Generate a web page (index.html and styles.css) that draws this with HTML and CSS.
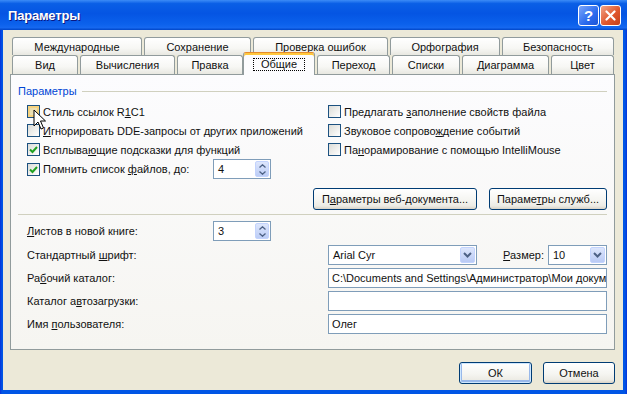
FILE: index.html
```html
<!DOCTYPE html>
<html lang="ru">
<head>
  <meta charset="UTF-8">
  <title>Параметры</title>
  <link rel="stylesheet" href="styles.css">
</head>
<body>
  <div class="window">
    <div class="titlebar">
      <span class="title">Параметры</span>
      <span class="cap-btn help">?</span>
      <span class="cap-btn close">
        <svg width="11" height="11" viewBox="0 0 11 11"><path d="M1.5 1.5 L9.5 9.5 M9.5 1.5 L1.5 9.5" stroke="#fff" stroke-width="2.2" stroke-linecap="round"/></svg>
      </span>
    </div>

    <div class="client">
      <div class="tabs">
        <div class="tab-row back">
          <div class="tab t-intl">Международные</div>
          <div class="tab t-save">Сохранение</div>
          <div class="tab t-errors">Проверка ошибок</div>
          <div class="tab t-spell">Орфография</div>
          <div class="tab t-secure">Безопасность</div>
        </div>
        <div class="tab-row front">
          <div class="tab t-view">Вид</div>
          <div class="tab t-calc">Вычисления</div>
          <div class="tab t-edit">Правка</div>
          <div class="tab active"><span class="focus">Общие</span></div>
          <div class="tab t-trans">Переход</div>
          <div class="tab t-lists">Списки</div>
          <div class="tab t-chart">Диаграмма</div>
          <div class="tab t-color">Цвет</div>
        </div>
      </div>

      <div class="panel">
        <div class="group-head">
          <span>Параметры</span>
          <span class="rule"></span>
        </div>

        <div class="options">
          <div class="col">
            <label class="check"><span class="box hover"></span><span>Стиль ссылок R<u>1</u>C1</span></label>
            <label class="check"><span class="box"></span><span><u>И</u>гнорировать DDE-запросы от других приложений</span></label>
            <label class="check"><span class="box checked"><svg width="11" height="11" viewBox="0 0 11 11"><path d="M2 5.5 L4.5 8 L9 3" fill="none" stroke="#21A121" stroke-width="2"/></svg></span><span>Всплыва<u>ю</u>щие подсказки для функций</span></label>
            <div class="spin-row">
              <label class="check wide"><span class="box checked"><svg width="11" height="11" viewBox="0 0 11 11"><path d="M2 5.5 L4.5 8 L9 3" fill="none" stroke="#21A121" stroke-width="2"/></svg></span><span>Помнить список <u>ф</u>айлов, до:</span></label>
              <div class="spin">
                <span>4</span>
                <span class="spin-btn">
                  <svg width="7" height="4" viewBox="0 0 7 4"><path d="M0.5 3.5 L3.5 0.8 L6.5 3.5" fill="none" stroke="#4D6185" stroke-width="1.3"/></svg>
                  <svg width="7" height="4" viewBox="0 0 7 4"><path d="M0.5 0.5 L3.5 3.2 L6.5 0.5" fill="none" stroke="#4D6185" stroke-width="1.3"/></svg>
                </span>
              </div>
            </div>
          </div>
          <div class="col">
            <label class="check"><span class="box"></span><span>Предлагать <u>з</u>аполнение свойств файла</span></label>
            <label class="check"><span class="box"></span><span>Звуковое сопрово<u>ж</u>дение событий</span></label>
            <label class="check"><span class="box"></span><span>Па<u>н</u>орамирование с помощью IntelliMouse</span></label>
          </div>
        </div>

        <div class="btn-row">
          <button class="btn web">П<u>а</u>раметры веб-документа...</button>
          <button class="btn svc">Параме<u>т</u>ры служб...</button>
        </div>

        <div class="separator"></div>

        <div class="form">
          <div class="form-row first">
            <span class="lbl short"><u>Л</u>истов в новой книге:</span>
            <div class="spin">
              <span>3</span>
              <span class="spin-btn">
                <svg width="7" height="4" viewBox="0 0 7 4"><path d="M0.5 3.5 L3.5 0.8 L6.5 3.5" fill="none" stroke="#4D6185" stroke-width="1.3"/></svg>
                <svg width="7" height="4" viewBox="0 0 7 4"><path d="M0.5 0.5 L3.5 3.2 L6.5 0.5" fill="none" stroke="#4D6185" stroke-width="1.3"/></svg>
              </span>
            </div>
          </div>
          <div class="form-row font-row">
            <span class="lbl">Стандартный <u>ш</u>рифт:</span>
            <div class="combo font">
              <span>Arial Cyr</span>
              <span class="drop"><svg width="9" height="6" viewBox="0 0 9 6"><path d="M1 1 L4.5 4.5 L8 1" fill="none" stroke="#4D6185" stroke-width="2"/></svg></span>
            </div>
            <span class="size-lbl"><u>Р</u>азмер:</span>
            <div class="combo size">
              <span>10</span>
              <span class="drop"><svg width="9" height="6" viewBox="0 0 9 6"><path d="M1 1 L4.5 4.5 L8 1" fill="none" stroke="#4D6185" stroke-width="2"/></svg></span>
            </div>
          </div>
          <div class="form-row">
            <span class="lbl">Ра<u>б</u>очий каталог:</span>
            <div class="field">C:\Documents and Settings\Администратор\Мои документы</div>
          </div>
          <div class="form-row">
            <span class="lbl">Каталог а<u>в</u>тозагрузки:</span>
            <div class="field"></div>
          </div>
          <div class="form-row">
            <span class="lbl">Имя <u>п</u>ользователя:</span>
            <div class="field">Олег</div>
          </div>
        </div>
      </div>

      <div class="footer">
        <button class="btn ok">ОК</button>
        <button class="btn cancel">Отмена</button>
      </div>
    </div>

    <!-- mouse pointer over the first checkbox -->
    <svg class="pointer" width="14" height="22" viewBox="0 0 14 22">
      <path d="M1 1 L1 17 L5 13 L8 20 L10.5 19 L7.5 12 L12.5 12 Z" fill="#fff" stroke="#000" stroke-width="1"/>
    </svg>
  </div>
</body>
</html>
```

FILE: styles.css
```css
* {
  box-sizing: border-box;
}

body {
  margin: 0;
  font-family: 'Liberation Sans', Arial, sans-serif;
  font-size: 11px;
  color: #111;
}

u {
  text-decoration: underline;
  text-underline-offset: 1px;
}

.window {
  position: relative;
  width: 627px;
  height: 394px;
  display: flex;
  flex-direction: column;
  background: linear-gradient(to right, #0831D9, #0055E5 2px, #0055E5 calc(100% - 2px), #0831D9);
  overflow: hidden;
}

/* title bar */
.titlebar {
  height: 30px;
  display: flex;
  align-items: center;
  padding: 0 6px 0 8px;
  background: linear-gradient(#3C8CF7 0%, #0A5FE6 12%, #0555E3 45%, #0B61EC 80%, #1568F0 92%, #0045C7 100%);
}

.title {
  flex: 1;
  color: #fff;
  font-weight: bold;
  font-size: 13px;
  letter-spacing: -0.2px;
  text-shadow: 1px 1px #0A1883;
}

.cap-btn {
  width: 21px;
  height: 21px;
  border: 1px solid #fff;
  border-radius: 3px;
  display: flex;
  align-items: center;
  justify-content: center;
}

.help {
  background: linear-gradient(135deg, #7BA6FA, #2B6BEE 60%, #1D55D6);
  color: #fff;
  font-weight: bold;
  font-size: 15px;
}

.close {
  margin-left: 1px;
  background: linear-gradient(135deg, #F0A488, #E0582E 55%, #C5401A);
}

/* dialog body */
.client {
  flex: 1;
  margin: 0 4px 4px 3px;
  padding: 7px 8px 0 7px;
  background: #ECE9D8;
}

.tab-row {
  display: flex;
  gap: 2px;
  padding-left: 2px;
}

.tab-row.back {
  height: 18px;
}

.tab-row.front {
  height: 19px;
  align-items: flex-end;
  position: relative;
  z-index: 1;
}

.tab {
  height: 100%;
  display: flex;
  align-items: center;
  justify-content: center;
  border: 1px solid #919B9C;
  border-bottom: none;
  border-radius: 3px 3px 0 0;
  background: linear-gradient(#FFFFFF, #F7F7F4 60%, #E8E8E1);
  white-space: nowrap;
}

.t-intl { width: 130px; }
.t-save { width: 107px; }
.t-errors { width: 135px; }
.t-spell { width: 110px; }
.t-secure { width: 112px; }

.t-view { width: 66px; }
.t-calc { width: 95px; }
.t-edit { width: 66px; }
.t-trans { width: 73px; }
.t-lists { width: 68px; }
.t-chart { width: 87px; }
.t-color { width: 63px; }

.tab.active {
  width: 72px;
  height: 23px;
  margin: 0 0 -1px -2px;
  padding-top: 1px;
  border-top: 1px solid #E68B2C;
  background: #FCFCFE;
  box-shadow: inset 0 2px 0 #FFC83C;
}

.focus {
  border: 1px dotted #000;
  padding: 0 7px;
  line-height: 11px;
}

.panel {
  height: 276px;
  border: 1px solid #919B9C;
  background: linear-gradient(#FCFCFE, #F6F5F1);
  padding: 8px 7px 0 7px;
}

.group-head {
  height: 16px;
  display: flex;
  align-items: center;
  gap: 5px;
  color: #0046D5;
}

.rule {
  flex: 1;
  height: 1px;
  background: #D0D0BF;
}

.options {
  display: grid;
  grid-template-columns: 301px 1fr;
  margin: 3px 0 0 9px;
}

.check {
  height: 19px;
  display: flex;
  align-items: center;
  white-space: nowrap;
}

.box {
  width: 13px;
  height: 13px;
  margin-right: 3px;
  flex-shrink: 0;
  display: flex;
  align-items: center;
  justify-content: center;
  border: 1px solid #1C5180;
  background: linear-gradient(135deg, #DCDCD7, #FFFFFF);
}

.box.hover {
  background: linear-gradient(135deg, #E6D9A8, #F3E9C2);
  box-shadow: inset 0 0 0 2px #F5D27F;
}

.spin-row {
  height: 20px;
  display: flex;
  align-items: center;
}

.check.wide {
  width: 186px;
}

.spin {
  width: 58px;
  height: 20px;
  display: flex;
  align-items: center;
  padding: 0 1px 0 4px;
  border: 1px solid #7F9DB9;
  background: #fff;
}

.spin-btn {
  margin-left: auto;
  width: 14px;
  height: 16px;
  display: flex;
  flex-direction: column;
  align-items: center;
  justify-content: center;
  gap: 3px;
  border-radius: 2px;
  background: linear-gradient(#DDE6FC, #BCCDF6);
  border: 1px solid #C3D3FD;
}

.btn-row {
  display: flex;
  justify-content: flex-end;
  gap: 12px;
  margin-top: 9px;
}

.btn {
  height: 22px;
  padding: 0;
  font: inherit;
  color: #111;
  border: 1px solid #003C74;
  border-radius: 3px;
  background: linear-gradient(#FFFFFF, #F5F5F1 55%, #ECEBE4 85%, #D8D2C6);
}

.btn.web { width: 164px; }
.btn.svc { width: 118px; }

.separator {
  height: 1px;
  margin-top: 4px;
  background: #D0D0BF;
}

.form {
  margin: 6px 0 0 9px;
}

.form-row {
  height: 20px;
  display: flex;
  align-items: center;
  margin-top: 3px;
}

.form-row.first {
  margin-top: 0;
}

.form-row.font-row {
  margin-top: 4px;
}

.lbl {
  width: 301px;
  flex-shrink: 0;
}

.lbl.short {
  width: 186px;
}

.combo {
  height: 20px;
  display: flex;
  align-items: center;
  padding: 0 1px 0 4px;
  border: 1px solid #7F9DB9;
  background: #fff;
}

.combo.font { width: 149px; }
.combo.size { width: 59px; }

.size-lbl {
  margin: 0 4px 0 auto;
}

.drop {
  margin-left: auto;
  width: 15px;
  height: 16px;
  display: flex;
  align-items: center;
  justify-content: center;
  border-radius: 2px;
  background: linear-gradient(#DDE6FC, #B9CAF5);
  border: 1px solid #C3D3FD;
}

.field {
  flex: 1;
  height: 20px;
  line-height: 18px;
  padding-left: 3px;
  border: 1px solid #7F9DB9;
  background: #fff;
  white-space: nowrap;
  overflow: hidden;
}

.footer {
  display: flex;
  justify-content: flex-end;
  gap: 11px;
  margin-top: 12px;
}

.btn.ok {
  width: 73px;
  box-shadow: inset 0 0 0 1px #CEE7FF, inset 0 -1px 0 2px #98B8EA;
}

.btn.cancel {
  width: 72px;
}

.pointer {
  position: absolute;
  left: 33px;
  top: 109px;
}
```
